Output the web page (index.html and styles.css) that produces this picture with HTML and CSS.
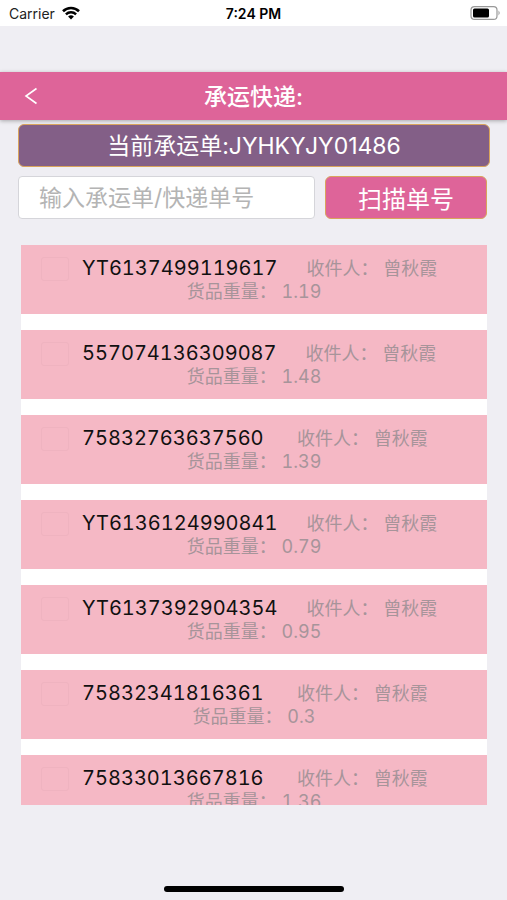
FILE: index.html
```html
<!DOCTYPE html>
<html lang="zh-CN">
<head>
  <meta charset="UTF-8">
  <title>承运快递</title>
  <meta name="viewport" content="width=device-width, initial-scale=1">
  <link rel="stylesheet" href="styles.css">
</head>
<body>
  <div class="status-bar">
    <div class="carrier">
      <span>Carrier</span>
      <svg width="18" height="14" viewBox="0 0 18 14" aria-hidden="true">
        <path d="M1 5.2a11.5 11.5 0 0 1 16 0" fill="none" stroke="#000" stroke-width="2.6"/>
        <path d="M3.9 8.3a7.3 7.3 0 0 1 10.2 0" fill="none" stroke="#000" stroke-width="2.4"/>
        <path d="M9 13.6l-2.9-3a4.2 4.2 0 0 1 5.8 0z" fill="#000"/>
      </svg>
    </div>
    <span class="clock">7:24 PM</span>
    <div class="battery">
      <svg width="31" height="14" viewBox="0 0 31 14" aria-hidden="true">
        <rect x="1" y="0.6" width="26" height="12.8" rx="3.5" fill="#fff" stroke="#999" stroke-width="1.2"/>
        <rect x="3" y="2.4" width="16" height="9.2" rx="1.5" fill="#000"/>
        <path d="M28.5 4.6q2.4 2.4 0 4.8z" fill="#999"/>
      </svg>
    </div>
  </div>

  <header class="header">
    <button class="back" type="button" aria-label="返回">
      <svg width="14" height="18" viewBox="0 0 14 18" aria-hidden="true">
        <path d="M12.5 1.5L2 9l10.500 7.500" fill="none" stroke="#fff" stroke-width="1.6"/>
      </svg>
    </button>
    <h1>承运快递:</h1>
  </header>

  <main class="content">
    <div class="current">当前承运单:JYHKYJY01486</div>

    <form class="search">
      <input type="text" id="keyword" placeholder="输入承运单/快递单号" aria-label="输入承运单/快递单号">
      <button class="scan" type="button">扫描单号</button>
    </form>

    <ul class="list">
      <li class="item">
        <div class="line">
          <input type="checkbox" id="p1">
          <label for="p1">YT6137499119617</label>
          <span>收件人： 曾秋霞</span>
        </div>
        <p class="weight">货品重量： 1.19</p>
      </li>
      <li class="item">
        <div class="line">
          <input type="checkbox" id="p2">
          <label for="p2">557074136309087</label>
          <span>收件人： 曾秋霞</span>
        </div>
        <p class="weight">货品重量： 1.48</p>
      </li>
      <li class="item">
        <div class="line">
          <input type="checkbox" id="p3">
          <label for="p3">75832763637560</label>
          <span>收件人： 曾秋霞</span>
        </div>
        <p class="weight">货品重量： 1.39</p>
      </li>
      <li class="item">
        <div class="line">
          <input type="checkbox" id="p4">
          <label for="p4">YT6136124990841</label>
          <span>收件人： 曾秋霞</span>
        </div>
        <p class="weight">货品重量： 0.79</p>
      </li>
      <li class="item">
        <div class="line">
          <input type="checkbox" id="p5">
          <label for="p5">YT6137392904354</label>
          <span>收件人： 曾秋霞</span>
        </div>
        <p class="weight">货品重量： 0.95</p>
      </li>
      <li class="item">
        <div class="line">
          <input type="checkbox" id="p6">
          <label for="p6">75832341816361</label>
          <span>收件人： 曾秋霞</span>
        </div>
        <p class="weight">货品重量： 0.3</p>
      </li>
      <li class="item">
        <div class="line">
          <input type="checkbox" id="p7">
          <label for="p7">75833013667816</label>
          <span>收件人： 曾秋霞</span>
        </div>
        <p class="weight">货品重量： 1.36</p>
      </li>
    </ul>
  </main>

  <div class="home-bar"></div>
</body>
</html>
```

FILE: styles.css
```css
:root {
  --pink: #de6499;
  --purple: #835f87;
  --card: #f5b8c5;
  --gold: #d9a45c;
  --gray: #a7949a;
  --page: #efeef3;
}
* {
  box-sizing: border-box;
}
body {
  display: flex;
  flex-direction: column;
  height: 100vh;
  margin: 0;
  overflow: hidden;
  background: var(--page);
  font-family: Inter, "Noto Sans CJK SC", sans-serif;
}
button, input {
  font-family: inherit;
}

/* status bar */
.status-bar {
  display: grid;
  grid-template-columns: 1fr auto 1fr;
  align-items: center;
  height: 26px;
  flex-shrink: 0;
  padding: 0 6px 0 9px;
  background: #fff;
  font-size: 14px;
}
.carrier {
  display: flex;
  align-items: center;
  gap: 7px;
  color: #222;
}
.clock {
  margin-right: 3px;
  font-weight: 600;
}
.battery {
  display: flex;
  justify-content: flex-end;
}

/* title bar */
.header {
  display: grid;
  grid-template-columns: 62px 1fr 62px;
  align-items: center;
  height: 48px;
  flex-shrink: 0;
  margin-top: 46px;
  background: var(--pink);
  color: #fff;
  box-shadow: 0 1px 4px rgba(0,0,0,0.3);
}
.header h1 {
  margin: 0;
  padding-top: 2px;
  font-size: 23px;
  line-height: 32px;
  font-weight: 500;
  text-align: center;
}
.back {
  display: flex;
  justify-content: center;
  padding: 12px 0;
  background: none;
  border: none;
  cursor: pointer;
}

.content {
  display: flex;
  flex-direction: column;
  flex: 1;
  min-height: 0;
  padding: 4px 17px 0 18px;
}
.current {
  flex-shrink: 0;
  padding-top: 1px;
  border: 1px solid var(--gold);
  border-radius: 6px;
  background: var(--purple);
  color: #fff;
  font-size: 23px;
  line-height: 40px;
  text-align: center;
}
.search {
  display: flex;
  gap: 10px;
  height: 43px;
  flex-shrink: 0;
  margin: 9px 3px 0 0;
}
.search input {
  flex: 1;
  min-width: 0;
  padding: 0 20px;
  border: 1px solid #d5d5da;
  border-radius: 4px;
  background: #fff;
  font-size: 23px;
}
.search input::placeholder {
  color: #b4b4b4;
}
.scan {
  width: 162px;
  padding: 0;
  border: 1px solid var(--gold);
  border-radius: 6px;
  background: var(--pink);
  color: #fff;
  font-size: 24px;
  cursor: pointer;
}

/* parcels */
.list {
  flex: 1;
  min-height: 0;
  margin: 26px 3px 0;
  padding: 0;
  overflow-y: auto;
  scrollbar-width: none;
  background: #fff;
  list-style: none;
}
.item {
  padding: 12px 20px 11px;
  background: var(--card);
  color: var(--gray);
  font-size: 18px;
  line-height: 23px;
  font-variant-numeric: tabular-nums;
}
.item + .item {
  margin-top: 16px;
}
.line {
  display: flex;
  align-items: center;
  height: 23px;
  white-space: nowrap;
}
.line input {
  appearance: none;
  width: 28px;
  height: 24px;
  margin: 0 13px 0 0;
  border: 1px solid #efb3c0;
  border-radius: 3px;
}
.line input:checked {
  background: var(--pink);
}
.line label {
  min-width: 186px;
  margin-right: 29px;
  color: #111;
  font-size: 20px;
}
.weight {
  margin: 0;
  text-align: center;
}

.home-bar {
  width: 180px;
  height: 6px;
  flex-shrink: 0;
  margin: 81px auto 8px;
  border-radius: 3px;
  background: #000;
}
```
